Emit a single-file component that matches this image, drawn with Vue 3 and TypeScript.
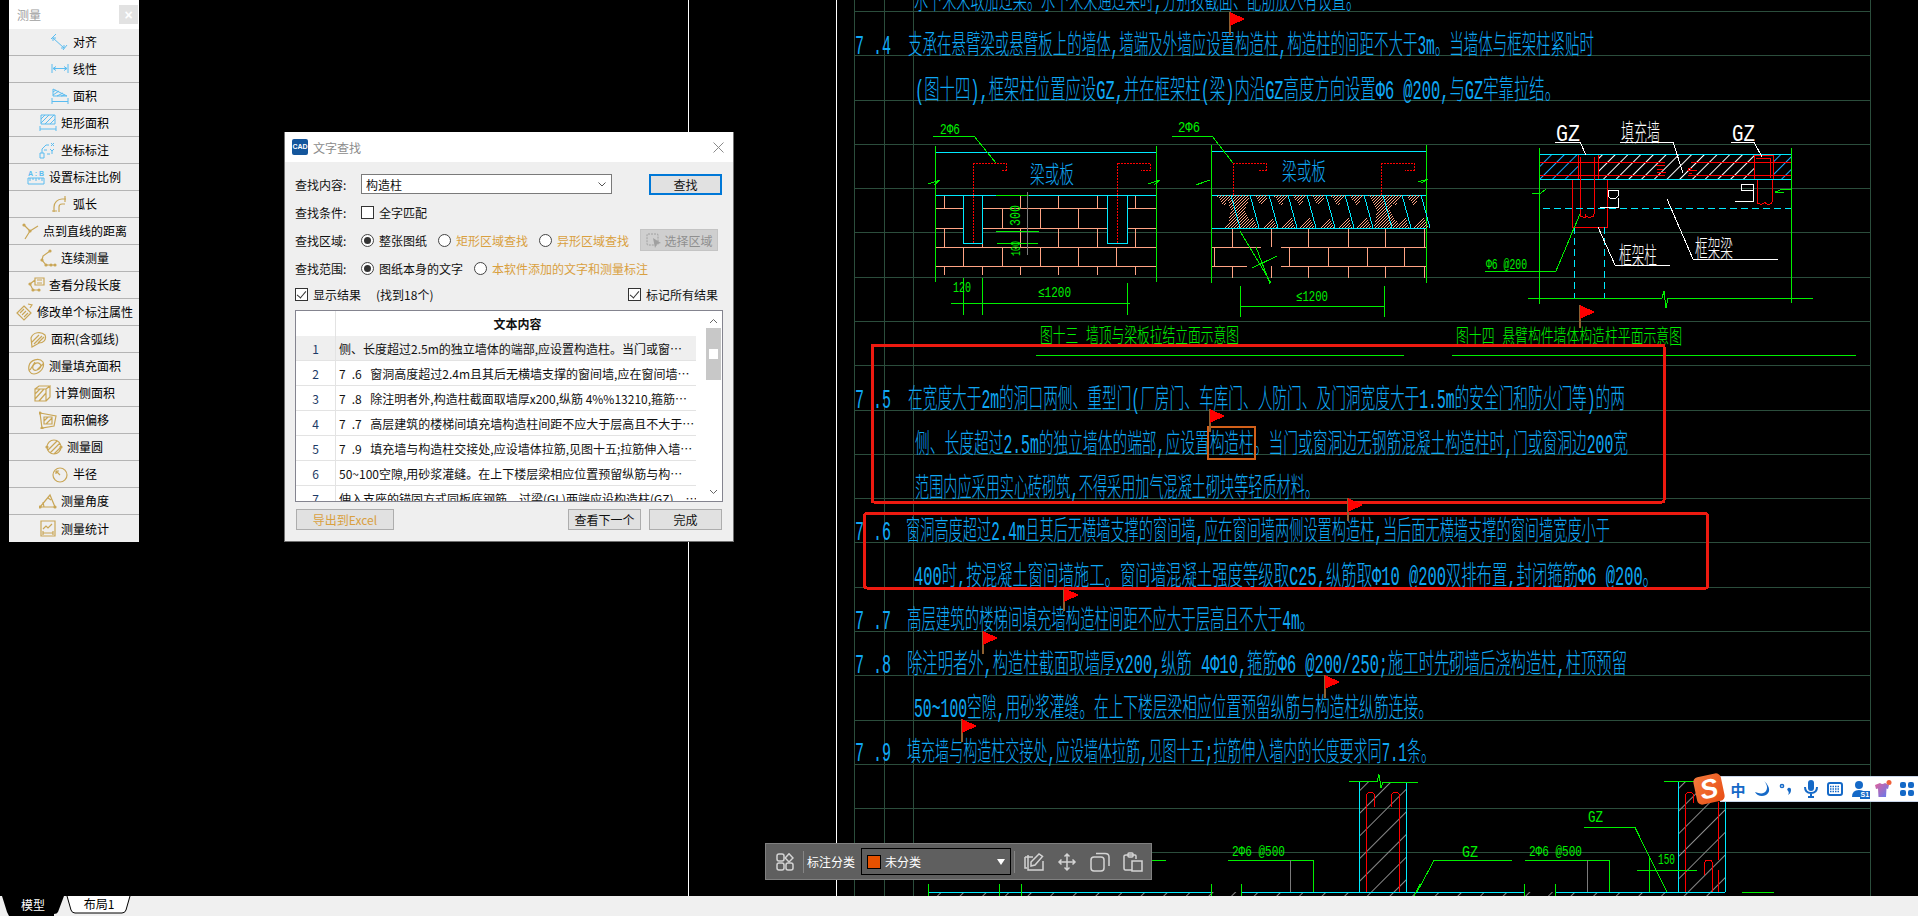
<script setup lang="ts">
interface Note {
	x: number;
	y: number;
	w: number;
	text: string;
	size?: number;
	cls?: string;
}

interface Tool {
	name: string;
	gold?: boolean;
	d: string;
	dots?: number[][];
	label?: string;
}

const gridY = [11, 55, 100, 144, 188, 232, 277, 321, 365, 410, 454, 498, 542, 587, 631, 675, 720, 764, 808, 852];
const gridX = [854, 884, 913, 1870];

const gridPath =
	gridY.map((y) => `M854 ${y}H1870`).join("") + gridX.map((x) => `M${x} 0V896`).join("");

// blue specification text of the drawing
const notes: Note[] = [
	{ x: 914, y: 9, w: 446, text: "水下未采取加过梁。水下未采通过梁时,分别按截面、配筋放入有设置。" },
	{ x: 855, y: 54, w: 36, text: "7 .4" },
	{ x: 908, y: 54, w: 686, text: "支承在悬臂梁或悬臂板上的墙体,墙端及外墙应设置构造柱,构造柱的间距不大于3m。当墙体与框架柱紧贴时" },
	{ x: 915, y: 99, w: 645, text: "(图十四),框架柱位置应设GZ,并在框架柱(梁)内沿GZ高度方向设置Φ6 @200,与GZ牢靠拉结。" },
	{ x: 855, y: 408, w: 36, text: "7 .5" },
	{ x: 908, y: 408, w: 717, text: "在宽度大于2m的洞口两侧、重型门(厂房门、车库门、人防门、及门洞宽度大于1.5m的安全门和防火门等)的两" },
	{ x: 915, y: 453, w: 713, text: "侧、长度超过2.5m的独立墙体的端部,应设置构造柱。当门或窗洞边无钢筋混凝土构造柱时,门或窗洞边200宽" },
	{ x: 915, y: 497, w: 404, text: "范围内应采用实心砖砌筑,不得采用加气混凝土砌块等轻质材料。" },
	{ x: 855, y: 540, w: 36, text: "7 .6" },
	{ x: 906, y: 540, w: 704, text: "窗洞高度超过2.4m且其后无横墙支撑的窗间墙,应在窗间墙两侧设置构造柱,当后面无横墙支撑的窗间墙宽度小于" },
	{ x: 914, y: 585, w: 744, text: "400时,按混凝土窗间墙施工。窗间墙混凝土强度等级取C25,纵筋取Φ10 @200双排布置,封闭箍筋Φ6 @200。" },
	{ x: 855, y: 629, w: 36, text: "7 .7" },
	{ x: 907, y: 629, w: 407, text: "高层建筑的楼梯间填充墙构造柱间距不应大于层高且不大于4m。" },
	{ x: 855, y: 673, w: 36, text: "7 .8" },
	{ x: 907, y: 673, w: 720, text: "除注明者外,构造柱截面取墙厚x200,纵筋 4Φ10,箍筋Φ6 @200/250;施工时先砌墙后浇构造柱,柱顶预留" },
	{ x: 914, y: 717, w: 519, text: "50~100空隙,用砂浆灌缝。在上下楼层梁相应位置预留纵筋与构造柱纵筋连接。" },
	{ x: 855, y: 761, w: 36, text: "7 .9" },
	{ x: 907, y: 761, w: 528, text: "填充墙与构造柱交接处,应设墙体拉筋,见图十五;拉筋伸入墙内的长度要求同7.1条。" },
	{ x: 1030, y: 183, w: 44, text: "梁或板", size: 24 },
	{ x: 1282, y: 180, w: 44, text: "梁或板", size: 24 },
];

const labels: Note[] = [
	{ x: 1040, y: 343, w: 199, text: "图十三 墙顶与梁板拉结立面示意图", size: 20, cls: "t-green" },
	{ x: 1456, y: 344, w: 226, text: "图十四 悬臂构件墙体构造柱平面示意图", size: 20, cls: "t-green" },
	{ x: 940, y: 134, w: 20, text: "2Φ6", size: 14, cls: "t-green" },
	{ x: 1178, y: 132, w: 22, text: "2Φ6", size: 14, cls: "t-green" },
	{ x: 953, y: 292, w: 18, text: "120", size: 14, cls: "t-green" },
	{ x: 1038, y: 297, w: 33, text: "≤1200", size: 14, cls: "t-green" },
	{ x: 1296, y: 301, w: 32, text: "≤1200", size: 14, cls: "t-green" },
	{ x: 1486, y: 269, w: 41, text: "Φ6 @200", size: 14, cls: "t-green" },
	{ x: 1556, y: 141, w: 24, text: "GZ", size: 24, cls: "t-white" },
	{ x: 1732, y: 141, w: 23, text: "GZ", size: 24, cls: "t-white" },
	{ x: 1621, y: 141, w: 39, text: "填充墙", size: 24, cls: "t-white" },
	{ x: 1619, y: 264, w: 38, text: "框架柱", size: 24, cls: "t-white" },
	{ x: 1695, y: 257, w: 38, text: "框架梁", size: 24, cls: "t-white" },
	{ x: 1232, y: 856, w: 53, text: "2Φ6 @500", size: 15, cls: "t-green" },
	{ x: 1529, y: 856, w: 53, text: "2Φ6 @500", size: 15, cls: "t-green" },
	{ x: 1462, y: 857, w: 16, text: "GZ", size: 17, cls: "t-green" },
	{ x: 1588, y: 822, w: 15, text: "GZ", size: 17, cls: "t-green" },
	{ x: 1658, y: 864, w: 17, text: "150", size: 15, cls: "t-green" },
];

const flags = [
	[1230, 12],
	[1580, 305],
	[1210, 409],
	[1348, 498],
	[1064, 588],
	[983, 631],
	[1325, 675],
	[962, 719],
];

function bricks(rows: [number, number, number[]][]): string {
	return rows
		.map(([top, bottom, xs]) => xs.map((x) => `M${x} ${top}V${bottom}`).join(""))
		.join("");
}

const oddA = [944, 982, 1020, 1058, 1097, 1135];
const evenA = [963, 1002, 1040, 1078, 1116];
const oddB = [1232, 1271, 1308, 1348, 1385, 1424];
const evenB = [1214, 1289, 1328, 1367, 1404];

const brickPath =
	"M935 208H1156M935 228H1156M935 247H1156M935 266H1156" +
	bricks([
		[195, 208, oddA],
		[208, 228, evenA],
		[228, 247, oddA],
		[247, 266, evenA],
		[266, 275, oddA],
	]) +
	"M1211 247H1261M1281 247H1426M1211 266H1247M1281 266H1426" +
	bricks([
		[228, 247, oddB],
		[247, 266, evenB],
		[266, 278, oddB],
	]);

// wedge shapes of the slanted brick course
const wedges = Array.from({ length: 11 }, (_, k) => 1216 + k * 19);
const wedgeFill = wedges
	.map((x) => `M${x} 195h15l-7 11ZM${x + 8} 228h15l-5 -11Z`)
	.join("");
const wedgeLines = wedges.map((x) => `M${x + 15} 195l9 33`).join("");

const tools: Tool[] = [
	{ name: "对齐", d: "M2 5 13 15M5 1 0 6M16 12 12 17M2 5h3M2 5v3M13 15h-3M13 15v-3" },
	{ name: "线性", d: "M1 4v9M17 4v9M2 8.5h14M2 8.5l3-2M2 8.5l3 2M16 8.5l-3-2M16 8.5l-3 2" },
	{ name: "面积", d: "M2 2 16 9H2ZM2 5l3-2M2 8l6-4M6 9l6-3M10 9l4-1M1 11v6M17 11v6M1 14.5h16" },
	{ name: "矩形面积", d: "M2 1h14v9H2ZM2 5l4-4M2 9l8-8M6 10l9-9M11 10l5-5M1 12v5M17 12v5M1 15h16" },
	{ name: "坐标标注", d: "M1 12h4v5H1ZM3 12V8l4-4h3M5 9h3M12 2l3 3M15 2l-3 3M11 8l2 2 2-2M13 10v3M8 13h3" },
	{ name: "设置标注比例", label: "A:B", d: "M1 10h16v6H1ZM3 10v3M6 10v2M9 10v3M12 10v2M15 10v3" },
	{ name: "弧长", gold: true, d: "M3 17V12a8 8 0 0 1 8-8h4M14 1v6M1 16h5M8 17v-5a3 3 0 0 1 3-3h3" },
	{ name: "点到直线的距离", gold: true, d: "M3 3l6 6M9 9l8-5M9 9l-5 8", dots: [[3, 3], [9, 9]] },
	{ name: "连续测量", gold: true, d: "M11 2 4 7 3 11l4 5h10", dots: [[11, 2], [3, 11], [7, 16], [12, 16], [16, 16]] },
	{ name: "查看分段长度", gold: true, d: "M8 4 3 8l3 6h7M8 2h9v7H8ZM10 4h5M10 7h5", dots: [[3, 8], [6, 14], [12, 14]] },
	{ name: "修改单个标注属性", gold: true, d: "M9 3 16 10 9 17 2 10ZM5 10l4-4M7 12l4-4M9 14l4-4M13 1l4 1-2 3" },
	{ name: "面积(含弧线)", gold: true, d: "M2 8C4 2 12 1 16 5c2 5-2 8-6 8l-7 4ZM3 12l7-7M5 14l8-8M9 13l6-6" },
	{ name: "测量填充面积", gold: true, d: "M2 9C3 3 12 0 16 5c2 5-2 11-9 12C3 17 1 13 2 9ZM6 9c1-3 5-4 7-2s0 5-3 6-5-1-4-4ZM3 13l5-8M10 13l6-6" },
	{ name: "计算侧面积", gold: true, d: "M2 5h11v12H2ZM2 5l4-3h11l-4 3M13 17l4-4V2M2 10l5-5M2 15l9-10M6 17l7-8" },
	{ name: "面积偏移", gold: true, d: "M1 2 17 5 15 15 3 17ZM5 6h8v7H5ZM5 10l4-4M7 13l6-6", dots: [[1, 2], [3, 17]] },
	{ name: "测量圆", gold: true, d: "M16 9A7 7 0 1 1 2 9 7 7 0 0 1 16 9ZM3 12l9-9M5 15l10-10M9 16l6-6", dots: [[2, 9], [16, 9]] },
	{ name: "半径", gold: true, d: "M16 10A7 7 0 1 1 2 10 7 7 0 0 1 16 10ZM9 10 5 6M5 6h3M5 6v3" },
	{ name: "测量角度", gold: true, d: "M1 15h15L11 3ZM5 15l-1-5M9 6l3 2", dots: [[1, 15], [16, 15]] },
	{ name: "测量统计", gold: true, d: "M2 2h14v15H2ZM4 10l3-3 2 2 4-4M4 14h10M4 12v4M14 12v4" },
];

const results = [
	"侧、长度超过2.5m的独立墙体的端部,应设置构造柱。当门或窗…",
	"7\u2002.6\u2002 窗洞高度超过2.4m且其后无横墙支撑的窗间墙,应在窗间墙…",
	"7\u2002.8\u2002 除注明者外,构造柱截面取墙厚x200,纵筋 4%%13210,箍筋…",
	"7\u2002.7\u2002 高层建筑的楼梯间填充墙构造柱间距不应大于层高且不大于…",
	"7\u2002.9\u2002 填充墙与构造柱交接处,应设墙体拉筋,见图十五;拉筋伸入墙…",
	"50~100空隙,用砂浆灌缝。在上下楼层梁相应位置预留纵筋与构…",
	"伸入支座的锚固方式同板底钢筋。过梁(GL)两端应设构造柱(GZ)。…",
];
</script>

<template>
	<div class="app">
		<div class="canvas">
			<svg class="drawing" width="1918" height="896" viewBox="0 0 1918 896">
				<defs>
					<pattern id="hatchWhite" width="9" height="9" patternUnits="userSpaceOnUse" patternTransform="rotate(45)">
						<path d="M0 0V9" stroke="#fff" stroke-width="1" />
					</pattern>
					<pattern id="hatchBlue" width="9" height="9" patternUnits="userSpaceOnUse" patternTransform="rotate(45)">
						<path d="M0 0V9" stroke="#1ea7ff" stroke-width="1" />
					</pattern>
					<pattern id="hatchGray" width="16" height="16" patternUnits="userSpaceOnUse" patternTransform="rotate(45)">
						<path d="M0 0V16" stroke="#8a8a8a" stroke-width="1" />
					</pattern>
					<pattern id="dots" width="3" height="3" patternUnits="userSpaceOnUse">
						<rect x="0" y="0" width="1" height="1" fill="#ffa484" />
						<rect x="2" y="1" width="1" height="1" fill="#ffa484" />
						<rect x="1" y="2" width="1" height="1" fill="#ffa484" />
					</pattern>
					<pattern id="dotsGray" width="3" height="3" patternUnits="userSpaceOnUse">
						<rect x="0" y="0" width="1" height="1" fill="#8a8a8a" />
						<rect x="2" y="1" width="1" height="1" fill="#777" />
						<rect x="1" y="2" width="1" height="1" fill="#999" />
					</pattern>
				</defs>

				<path class="l-grid" :d="gridPath" />
				<path class="l-white" d="M688.5 0V896M836.5 0V896" />

				<!-- figure 13 left -->
				<path class="l-brick" :d="brickPath" />
				<rect x="963" y="195" width="19" height="48" fill="#000" />
				<rect x="963" y="195" width="19" height="48" fill="url(#dotsGray)" class="l-cyan" />
				<rect x="1107" y="195" width="20" height="48" fill="#000" />
				<rect x="1107" y="195" width="20" height="48" fill="url(#dotsGray)" class="l-cyan" />
				<path class="l-cyan" d="M935 152H1156M935 195H1156M1211 151H1426M1211 195H1426M1211 228H1426" />
				<path
					class="l-green"
					d="M935.5 146V282M1156.5 146V282M1211.5 145V283M1426.5 145V283M933 136H974L996 163M1172 136H1212L1233 163M996 195H1029M996 231H1039M997 243H1038M951 303H1130M963.5 278V315M982 278V315M1127 283V315M1240 306H1384M1240 286V317M1384 286V317M1240 231 1271 283M928 184l12-4-6 5M1148 184l12-4-6 5M1203 182l-7 3 14-5M1418 182l10-3-7 4M1252 268l25 -12M1256 247l14 37"
				/>
				<path class="l-red-dot" d="M973 163V243M973 163H1006V170H1001M1117.5 163V243M1117.5 163H1150V170H1141M1233 163V195M1233 163H1266V170H1258M1381 163V195M1381 163H1414V170H1405" />
				<path class="l-gray" d="M1027 192V255" />
				<text class="t-green rot" x="0" y="0" transform="translate(1020 226) rotate(-90)" textLength="21" lengthAdjust="spacingAndGlyphs" font-size="14">300</text>
				<text class="t-green rot" x="0" y="0" transform="translate(1020 256) rotate(-90)" textLength="15" lengthAdjust="spacingAndGlyphs" font-size="13">100</text>

				<!-- figure 13 right, slanted course -->
				<path :d="wedgeFill" fill="url(#dots)" />
				<path d="M1226 195h24l-5 16 8 17h-26l4-17ZM1369 195h26l-5 16 11 17h-27l3-17Z" fill="url(#dots)" />
				<path class="l-cyan" :d="wedgeLines" />

				<!-- figure 14 -->
				<rect x="1539" y="154" width="40" height="25" fill="url(#hatchBlue)" />
				<rect x="1598" y="154" width="157" height="25" fill="url(#hatchWhite)" />
				<rect x="1773" y="154" width="18" height="25" fill="url(#hatchBlue)" />
				<rect x="1578" y="154" width="20" height="25" fill="url(#dots)" class="l-red" />
				<rect x="1754" y="155" width="19" height="24" fill="url(#dots)" class="l-red" />
				<rect x="1572" y="179" width="35" height="48" fill="url(#dots)" class="l-red" />
				<path class="l-cyan" d="M1539 154.5H1791M1539 179.5H1791" />
				<path
					class="l-red"
					d="M1539 162.5H1665M1691 162.5H1791M1539 175.5H1665M1691 175.5H1791M1580 157V214q0 3 3 3h2v-3q1 3 3 3h3q3 0 3-3V157M1756 158H1770V178M1757 180V202q0 2 3 2h2q2 0 3-2 0 2 2 2h3q2 0 2-2V180M1656 165h9M1657 169h6M1657 172h9M1692 168h-3l-1 2 9 0M1692 173h-3M1691 175h-3"
				/>
				<path class="l-dash" d="M1543 208.5H1791M1574.5 227V298M1604.5 227V298" />
				<path
					class="l-white"
					d="M1555 142H1580L1586 155M1620 142H1673L1683 173M1731 142H1754L1762 157M1615 265H1670M1615 265 1598 227M1693 259H1778M1693 259 1667 199M1608 190h10v6l-2 2h-6l-2-2ZM1600 207H1618V198M1741 184h12v6h-12ZM1735 201H1753V190"
				/>
				<path
					class="l-green"
					d="M1539.5 148V304M1791.5 148V303M1528 298H1662l2-7 2 17 2-10H1813M1485 271H1556L1580 214M1532 193h9l5-4M1784 192h-9l8-3h8M1036 355H1404M1452 355H1856"
				/>

				<!-- lower detail -->
				<rect x="1359" y="782" width="48" height="110" fill="url(#hatchGray)" />
				<rect x="1678" y="782" width="48" height="110" fill="url(#hatchGray)" />
				<rect x="928" y="892" width="797" height="4" fill="url(#hatchGray)" />
				<path class="l-cyan" d="M1359.5 782V892M1406.5 782V892M1678.5 782V892M1725.5 782V892M928 892.5H1211M1241 892.5H1524M1555 892.5H1725" />
				<path
					class="l-red"
					d="M1366.5 892V797q0-5 4-5t4 5V807M1399.5 892V797q0-5-4-5t-4 5V807M1685.5 892V797q0-5 4-5t4 5V803M1718.5 892V870M1718.5 860V802M1704.5 875V864q0-4 4-4t4 4V892"
				/>
				<path
					class="l-green"
					d="M1349 781.5H1377l2-7 2 13 2-5H1418M1664 781.5H1695M1228 860.5H1313M1313 860V892M1434 860.5H1512M1434 860.5 1417 892M1525 860.5H1609M1609.5 860V892M1584 827.5H1635L1667 892M1637 870.5H1697M1649.5 858V892M1742 892.5H1774M1152 860.5H1166M928.5 884V896M999.5 884V896M1021.5 884V896M1211.5 884V896M1241.5 884V896M1524.5 884V896M1555.5 884V896M1420 884 1414 896"
				/>
				<path class="l-gray" d="M1290 860V892M1587 860V892" />

				<text
					v-for="note in notes"
					:key="note.text + note.y"
					class="t-blue"
					:x="note.x"
					:y="note.y"
					:font-size="note.size ?? 27"
					:textLength="note.w"
					lengthAdjust="spacingAndGlyphs"
				>{{ note.text }}</text>
				<text
					v-for="note in labels"
					:key="note.text + note.x"
					:class="note.cls"
					:x="note.x"
					:y="note.y"
					:font-size="note.size"
					:textLength="note.w"
					lengthAdjust="spacingAndGlyphs"
				>{{ note.text }}</text>

				<!-- review marks -->
				<rect class="mark" x="872" y="345" width="792" height="157" rx="2" />
				<rect class="mark" x="864.5" y="513.5" width="843" height="74.5" rx="2" />
				<rect class="hit" x="1208" y="427" width="46.5" height="32" />
				<g v-for="flag in flags" :key="flag[0]">
					<path class="pole" :d="`M${flag[0]} ${flag[1]}v23`" />
					<path :d="`M${flag[0]} ${flag[1]}l15 7-15 7Z`" fill="#ff0000" />
				</g>
			</svg>

			<aside class="measure">
				<div class="measure-title">
					<span>测量</span>
					<button class="measure-close">×</button>
				</div>
				<div v-for="tool in tools" :key="tool.name" class="measure-row">
					<svg class="tool-icon" :class="{ gold: tool.gold }" width="18" height="18" viewBox="0 0 18 18">
						<path :d="tool.d" />
						<circle v-for="dot in tool.dots ?? []" :key="dot.join()" :cx="dot[0]" :cy="dot[1]" r="1.6" class="dot" />
						<text v-if="tool.label" x="1" y="8" font-size="7" class="icon-label" textLength="16">{{ tool.label }}</text>
					</svg>
					<span>{{ tool.name }}</span>
				</div>
			</aside>

			<section class="dialog">
				<header class="dialog-head">
					<span class="app-icon">CAD</span>
					<span class="dialog-title">文字查找</span>
					<svg class="dialog-close" width="11" height="11" viewBox="0 0 11 11"><path d="M0.5 0.5 10.5 10.5M10.5 0.5 0.5 10.5" /></svg>
				</header>
				<div class="dialog-body">
					<div class="row">
						<span class="row-label">查找内容:</span>
						<div class="combo">
							<span>构造柱</span>
							<svg width="8" height="5" viewBox="0 0 8 5"><path d="M0.5 0.5 4 4 7.5 0.5" /></svg>
						</div>
						<button class="btn primary">查找</button>
					</div>
					<div class="row">
						<span class="row-label">查找条件:</span>
						<label class="opt"><i class="check"></i>全字匹配</label>
					</div>
					<div class="row">
						<span class="row-label">查找区域:</span>
						<label class="opt"><i class="radio on"></i>整张图纸</label>
						<label class="opt warm"><i class="radio"></i>矩形区域查找</label>
						<label class="opt warm"><i class="radio"></i>异形区域查找</label>
						<button class="btn pick">
							<svg width="16" height="15" viewBox="0 0 16 15"><rect x="1" y="1" width="11" height="11" rx="1" /><path class="arrow" d="M7 5 15 10 11 11 9 15Z" /></svg>
							选择区域
						</button>
					</div>
					<div class="row">
						<span class="row-label">查找范围:</span>
						<label class="opt"><i class="radio on"></i>图纸本身的文字</label>
						<label class="opt warm"><i class="radio"></i>本软件添加的文字和测量标注</label>
					</div>
					<div class="row row-short">
						<label class="opt"><i class="check checked"></i>显示结果</label>
						<span class="found">(找到18个)</span>
						<label class="opt end"><i class="check checked"></i>标记所有结果</label>
					</div>
					<div class="results">
						<div class="results-list">
							<div class="results-head"><span class="num"></span><span class="text">文本内容</span></div>
							<div v-for="(line, i) in results" :key="line" class="results-row" :class="{ active: i === 0 }">
								<span class="num">{{ i + 1 }}</span>
								<span class="text">{{ line }}</span>
							</div>
						</div>
						<div class="scroll">
							<svg width="9" height="6" viewBox="0 0 9 6"><path d="M1 5 4.5 1.5 8 5" /></svg>
							<div class="scroll-thumb"><i></i></div>
							<svg class="scroll-down" width="9" height="6" viewBox="0 0 9 6"><path d="M1 1 4.5 4.5 8 1" /></svg>
						</div>
					</div>
					<div class="actions">
						<button class="btn export">导出到Excel</button>
						<button class="btn next">查看下一个</button>
						<button class="btn done">完成</button>
					</div>
				</div>
			</section>

			<div class="toolbar">
				<svg class="tb-icon tb-first" width="18" height="18" viewBox="0 0 18 18">
					<rect x="1" y="1" width="7" height="7" rx="2" />
					<path d="M13 0.8 17 5 13 9 9.2 5Z" />
					<rect x="1" y="10" width="7" height="7" rx="2" />
					<rect x="10" y="10" width="7" height="7" rx="2" />
				</svg>
				<i class="tb-sep"></i>
				<span class="tb-label">标注分类</span>
				<div class="tb-select">
					<i class="swatch"></i>
					<span>未分类</span>
					<i class="tb-caret"></i>
				</div>
				<i class="tb-sep tb-sep-wide"></i>
				<svg class="tb-icon" width="20" height="20" viewBox="0 0 20 20">
					<path d="M1 5H9M1 5V16H3M4 3V18H19V9" />
					<path d="M7 14V10L15 2 18.5 4.5 11 13Z" />
				</svg>
				<svg class="tb-icon" width="20" height="20" viewBox="0 0 20 20">
					<path d="M10 2V18M2 10H18M7.5 4.5 10 2 12.5 4.5M7.5 15.500 10 18 12.5 15.500M4.500 7.500 2 10 4.500 12.500M15.500 7.500 18 10 15.500 12.500" />
				</svg>
				<svg class="tb-icon" width="20" height="20" viewBox="0 0 20 20">
					<rect x="1" y="5" width="13" height="14" rx="3" />
					<path d="M6 1.500H15Q19 1.500 19 5V14" />
				</svg>
				<svg class="tb-icon" width="20" height="20" viewBox="0 0 20 20">
					<path d="M9 18H2.500Q1 18 1 16V4Q1 3 3 3H12Q13 3 13 4V7" />
					<rect x="5" y="1" width="5" height="4" rx="1" />
					<rect x="9" y="9" width="10" height="10" />
				</svg>
			</div>

			<div class="sogou">
				<span class="sogou-logo"><b>S</b></span>
				<span class="sg-item sg-zh">中</span>
				<span class="sg-item">
					<svg width="16" height="16" viewBox="0 0 16 16"><path class="fill" d="M10 0C13 3 14 7 12 10S6 13 1 11C3 15 8 16 12 14S17 6 10 0Z" /></svg>
				</span>
				<span class="sg-item">
					<svg width="14" height="14" viewBox="0 0 14 14"><circle class="ring" cx="3" cy="4" r="1.600" /><path class="fill" d="M9 6a2 2 0 0 1 3 2c0 2-1 4-3 5 1-2 1-3 0-4a2 2 0 0 1 0-3Z" /></svg>
				</span>
				<span class="sg-item">
					<svg width="14" height="18" viewBox="0 0 14 18"><rect class="fill" x="4" y="0" width="6" height="11" rx="3" /><path class="line" d="M1 7Q1 13 7 13T13 7M7 13V17M4 17H10" /></svg>
				</span>
				<span class="sg-item">
					<svg width="16" height="14" viewBox="0 0 16 14"><rect class="line" x="1" y="1" width="14" height="12" rx="2" /><path class="dash" d="M3 4.500H13M3 7H13M3 9.500H13" /></svg>
				</span>
				<span class="sg-item sg-user">
					<svg width="16" height="16" viewBox="0 0 16 16"><circle class="fill" cx="8" cy="4" r="4" /><path class="fill" d="M1 16Q1 9 8 9T15 16Z" /></svg>
					<em>S1</em>
				</span>
				<span class="sg-item">
					<svg width="18" height="18" viewBox="0 0 18 18">
						<defs>
							<linearGradient id="shirt" x1="0" y1="0" x2="1" y2="1"><stop offset="0" stop-color="#e0609a" /><stop offset="1" stop-color="#5e7cf2" /></linearGradient>
						</defs>
						<path d="M1 5 6 3Q8 5 11 3L15 5 14 9 12.500 8.500 12 17H4.500L4 8.500 2 9Z" fill="url(#shirt)" />
						<circle cx="15" cy="2.500" r="2.500" fill="#f0603a" />
					</svg>
				</span>
				<span class="sg-item">
					<svg width="14" height="14" viewBox="0 0 14 14"><rect class="fill" x="0" y="0" width="6" height="6" rx="2" /><rect class="fill" x="8" y="0" width="6" height="6" rx="2" /><rect class="fill" x="0" y="8" width="6" height="6" rx="2" /><rect class="fill" x="8" y="8" width="6" height="6" rx="2" /></svg>
				</span>
			</div>
		</div>

		<footer class="tabs">
			<svg width="140" height="20" viewBox="0 0 140 20">
				<path d="M2 0H64L58 16Q57 18 54 18V20H9L7 16Z" fill="#000" />
				<path d="M67 0 71 14Q72 17 75 17H122Q125 17 126 14L130 0" fill="#fff" stroke="#000" />
				<text x="33" y="14" class="tab-text" fill="#fff">模型</text>
				<text x="99" y="13" class="tab-text" fill="#000">布局1</text>
			</svg>
		</footer>
	</div>
</template>

<style scoped>
.app {
	display: flex;
	flex-direction: column;
	width: 1918px;
	height: 916px;
	font-family: "Noto Sans CJK SC", "Liberation Sans", sans-serif;
	font-size: 12px;
	color: #111;
}

.canvas {
	position: relative;
	flex: none;
	height: 896px;
	background: #000;
	overflow: hidden;
}

.drawing {
	position: absolute;
	inset: 0;
	display: block;
	font-family: "Liberation Mono", "Noto Sans CJK SC", monospace;
}

.drawing path,
.drawing rect {
	shape-rendering: crispEdges;
}

.l-grid,
.l-white,
.l-green,
.l-cyan,
.l-red,
.l-brick,
.l-gray,
.l-dash,
.l-red-dot {
	fill: none;
	stroke-width: 1;
}

.l-grid {
	stroke: #2b4d3c;
}

.l-white {
	stroke: #fff;
}

.l-green {
	stroke: #00f000;
}

.l-cyan {
	stroke: #00eaff;
}

.l-red {
	stroke: #ff0000;
}

.l-brick {
	stroke: #ffa484;
}

.l-gray {
	stroke: #7a7a7a;
}

.l-dash {
	stroke: #00eaff;
	stroke-dasharray: 7 4;
}

.l-red-dot {
	stroke: #ff0000;
	stroke-dasharray: 2 1;
}

.t-blue {
	fill: #0fa8f5;
	font-weight: 300;
}

.t-green {
	fill: #00f000;
	font-weight: 300;
}

.t-white {
	fill: #fff;
	font-weight: 300;
}

.mark {
	fill: none;
	stroke: #ee1a10;
	stroke-width: 3;
}

.hit {
	fill: none;
	stroke: #d2601a;
	stroke-width: 2;
}

.pole {
	stroke: #8f6030;
	stroke-width: 2;
	fill: none;
}

/* measure panel */
.measure {
	position: absolute;
	left: 9px;
	top: 0;
	width: 130px;
	display: flex;
	flex-direction: column;
	background: #efefef;
}

.measure-title {
	display: flex;
	align-items: center;
	justify-content: space-between;
	height: 29px;
	padding: 0 1px 0 8px;
	box-sizing: border-box;
	background: #fff;
	color: #a0a0a0;
}

.measure-close {
	width: 19px;
	height: 19px;
	padding: 0;
	border: 0;
	background: #e2e2e2;
	color: #fff;
	font: 700 14px "Liberation Sans", sans-serif;
}

.measure-row {
	display: flex;
	align-items: center;
	justify-content: center;
	gap: 4px;
	height: 27px;
	box-sizing: border-box;
	padding-bottom: 1px;
	border-bottom: 1px solid #b4b4b4;
	color: #000;
	white-space: nowrap;
}

.measure-row:last-child {
	border-bottom: 0;
}

.tool-icon {
	flex: none;
	fill: none;
	stroke: #5bbcf0;
	stroke-width: 1;
}

.tool-icon.gold {
	stroke: #c9a656;
	stroke-width: 1.2;
}

.dot {
	fill: #c9a656;
	stroke: none;
}

.icon-label {
	fill: #5bbcf0;
	stroke: none;
	font-family: "Liberation Sans", sans-serif;
	font-weight: 700;
}

/* find dialog */
.dialog {
	position: absolute;
	left: 284px;
	top: 132px;
	width: 450px;
	height: 410px;
	box-sizing: border-box;
	border: 1px solid #707070;
	border-top: 0;
	display: flex;
	flex-direction: column;
	background: #efefef;
}

.dialog-head {
	display: flex;
	align-items: center;
	height: 30px;
	flex: none;
	padding: 0 9px 0 7px;
	background: #fff;
}

.app-icon {
	width: 16px;
	height: 16px;
	margin-right: 5px;
	border-radius: 2px;
	background: #14569c;
	color: #fff;
	font: 700 7px/16px "Liberation Sans", sans-serif;
	text-align: center;
}

.dialog-title {
	color: #8c8c8c;
}

.dialog-close {
	margin-left: auto;
	fill: none;
	stroke: #8a8a8a;
}

.dialog-body {
	flex: 1;
	display: flex;
	flex-direction: column;
	padding: 8px 10px 0;
}

.row {
	display: flex;
	align-items: center;
	height: 28px;
	flex: none;
	white-space: nowrap;
}

.row-short {
	height: 24px;
	margin-bottom: 4px;
}

.row-label {
	width: 66px;
	flex: none;
}

.combo {
	display: flex;
	align-items: center;
	justify-content: space-between;
	width: 251px;
	height: 20px;
	box-sizing: border-box;
	padding: 0 5px 0 4px;
	border: 1px solid #7a7a7a;
	background: #fff;
}

.combo svg {
	fill: none;
	stroke: #555;
}

.btn {
	height: 21px;
	padding: 0;
	box-sizing: border-box;
	border: 1px solid #adadad;
	background: #e1e1e1;
	font: inherit;
	color: #111;
}

.primary {
	width: 73px;
	margin-left: 37px;
	border: 2px solid #0078d7;
}

.opt {
	display: flex;
	align-items: center;
	gap: 5px;
	margin-right: 11px;
}

.warm {
	color: #d9a040;
}

.end {
	margin: 0 5px 0 auto;
}

.check {
	position: relative;
	width: 13px;
	height: 13px;
	box-sizing: border-box;
	border: 1px solid #333;
	background: #fff;
}

.check.checked::after {
	content: "";
	position: absolute;
	left: 3px;
	top: 0;
	width: 4px;
	height: 8px;
	border: solid #333;
	border-width: 0 1px 1px 0;
	transform: rotate(40deg);
}

.radio {
	position: relative;
	width: 13px;
	height: 13px;
	box-sizing: border-box;
	border: 1px solid #444;
	border-radius: 50%;
	background: #fff;
}

.radio.on::after {
	content: "";
	position: absolute;
	inset: 2px;
	border-radius: 50%;
	background: #333;
}

.found {
	margin-left: 4px;
}

.pick {
	display: flex;
	align-items: center;
	justify-content: center;
	gap: 3px;
	width: 78px;
	height: 22px;
	border-color: #c4c4c4;
	background: #cfcfcf;
	color: #8f8f8f;
}

.pick rect {
	fill: none;
	stroke: #a0a0a0;
	stroke-dasharray: 2 1;
}

.pick .arrow {
	fill: #a0a0a0;
}

.results {
	display: flex;
	height: 192px;
	flex: none;
	box-sizing: border-box;
	border: 1px solid #84848f;
	background: #fff;
	overflow: hidden;
}

.results-list {
	width: 400px;
	flex: none;
}

.results-head,
.results-row {
	display: flex;
	height: 25px;
	box-sizing: border-box;
}

.results-head .text {
	justify-content: center;
	font-weight: 700;
}

.results-row {
	border-bottom: 1px solid #e3e3e3;
}

.results-row.active {
	background: #efefef;
}

.num {
	display: flex;
	align-items: center;
	justify-content: center;
	width: 40px;
	flex: none;
	border-right: 1px solid #e3e3e3;
	box-sizing: border-box;
	color: #1c3a66;
}

.text {
	display: flex;
	align-items: center;
	flex: 1;
	min-width: 0;
	padding-left: 3px;
	white-space: pre;
	overflow: hidden;
}

.scroll {
	display: flex;
	flex-direction: column;
	align-items: center;
	width: 15px;
	margin-left: 10px;
	padding-top: 7px;
	box-sizing: border-box;
	height: 190px;
	fill: none;
	stroke: #666;
}

.scroll-thumb {
	display: flex;
	align-items: center;
	justify-content: center;
	align-self: stretch;
	height: 52px;
	margin-top: 4px;
	background: #c8c8c8;
}

.scroll-thumb i {
	width: 9px;
	height: 10px;
	background: #fff;
}

.scroll-down {
	margin-top: auto;
	margin-bottom: 6px;
}

.actions {
	display: flex;
	margin-top: 7px;
	padding: 0 1px;
}

.export {
	width: 98px;
	color: #d9a040;
}

.next {
	width: 73px;
	margin-left: auto;
}

.done {
	width: 73px;
	margin-left: 8px;
}

/* annotation toolbar */
.toolbar {
	position: absolute;
	left: 765px;
	top: 843px;
	display: flex;
	align-items: center;
	width: 387px;
	height: 37px;
	box-sizing: border-box;
	padding-left: 10px;
	border: 1px solid #808080;
	background: #5f5f5f;
	color: #fff;
}

.tb-icon {
	flex: none;
	margin-right: 13px;
	fill: none;
	stroke: #d4d4d4;
	stroke-width: 1.5;
}

.tb-first {
	margin-right: 9px;
}

.tb-sep {
	width: 1px;
	height: 22px;
	flex: none;
	margin-right: 3px;
	background: #858585;
}

.tb-sep-wide {
	margin-right: 9px;
}

.tb-label {
	flex: none;
	margin-right: 6px;
	white-space: nowrap;
}

.tb-select {
	display: flex;
	align-items: center;
	width: 150px;
	height: 27px;
	margin-right: 3px;
	box-sizing: border-box;
	padding: 0 5px;
	border: 1px solid #000;
	flex: none;
}

.swatch {
	width: 14px;
	height: 14px;
	margin-right: 4px;
	box-sizing: border-box;
	border: 1px solid #000;
	background: #e65100;
}

.tb-caret {
	margin-left: auto;
	width: 0;
	height: 0;
	border-left: 4.5px solid transparent;
	border-right: 4.5px solid transparent;
	border-top: 6px solid #fff;
}

/* input method bar */
.sogou {
	position: absolute;
	left: 1720px;
	top: 776px;
	width: 198px;
	height: 26px;
	box-sizing: border-box;
	display: flex;
	align-items: center;
	padding-left: 6px;
	border: solid #c9d6ea;
	border-width: 1px 0;
	background: #fff;
}

.sogou-logo {
	position: absolute;
	left: -25px;
	top: -2px;
	width: 28px;
	height: 28px;
	display: flex;
	align-items: center;
	justify-content: center;
	border-radius: 5px;
	background: linear-gradient(135deg, #f47a3c, #e84d14);
	transform: rotate(-12deg);
}

.sogou-logo b {
	color: #fff;
	font: italic 700 27px/1 "Liberation Sans", sans-serif;
}

.sg-item {
	position: relative;
	display: flex;
	align-items: center;
	justify-content: center;
	width: 24.2px;
	flex: none;
}

.sg-zh {
	color: #1569c7;
	font-size: 15px;
	font-weight: 700;
}

.sg-item .fill {
	fill: #1569c7;
}

.sg-item .ring {
	fill: none;
	stroke: #1569c7;
	stroke-width: 1.5;
}

.sg-item .line {
	fill: none;
	stroke: #1569c7;
	stroke-width: 2;
}

.sg-item .dash {
	fill: none;
	stroke: #1569c7;
	stroke-width: 1.5;
	stroke-dasharray: 1.500 1;
}

.sg-user em {
	position: absolute;
	right: 1px;
	bottom: -2px;
	padding: 0 1px;
	background: #1569c7;
	color: #fff;
	font: 700 7px/8px "Liberation Sans", sans-serif;
}

/* layout tabs */
.tabs {
	height: 20px;
	flex: none;
	background: #f0f0f0;
}

.tabs svg {
	display: block;
}

.tab-text {
	font-size: 12px;
	text-anchor: middle;
}
</style>

<style>
html,
body {
	margin: 0;
	background: #000;
	overflow: hidden;
}
</style>
